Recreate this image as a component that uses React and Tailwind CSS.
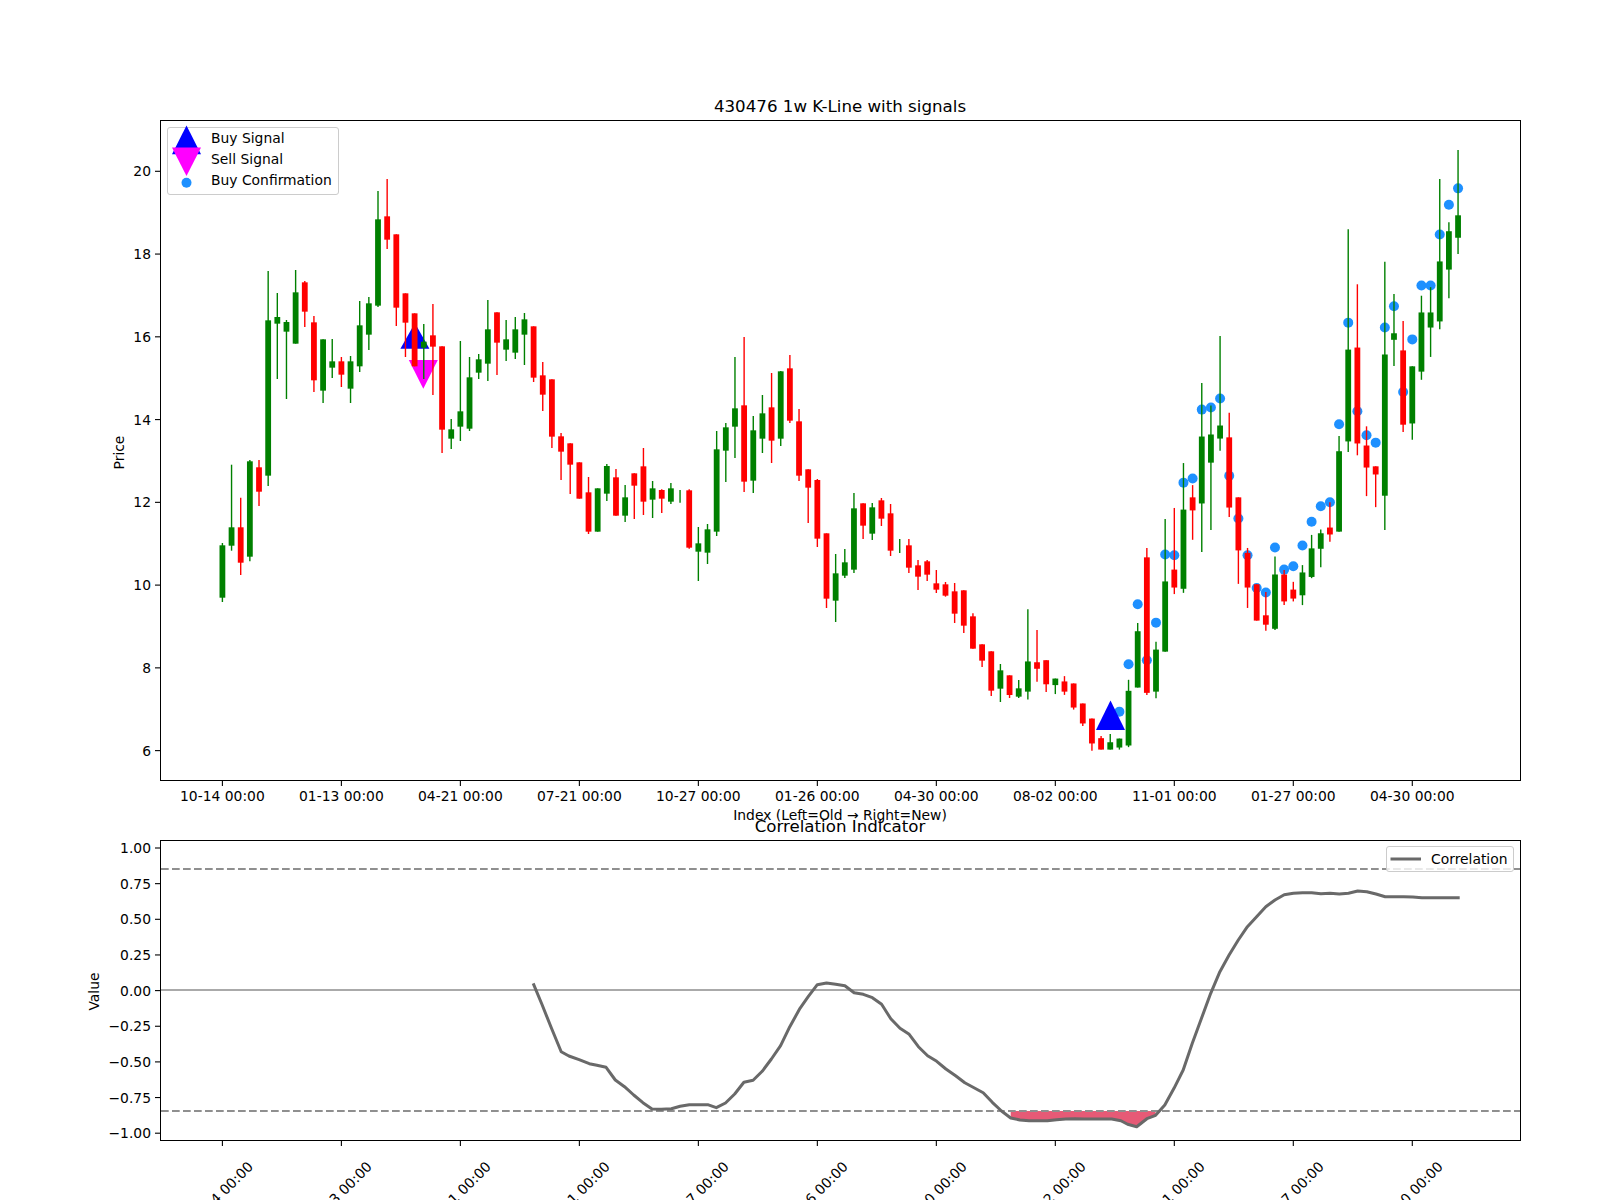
import React from "react";

const xAt = (i) => 222.4 + 9.153 * i;
const ticks = [
  "10-14 00:00", "01-13 00:00", "04-21 00:00", "07-21 00:00", "10-27 00:00", "01-26 00:00",
  "04-30 00:00", "08-02 00:00", "11-01 00:00", "01-27 00:00", "04-30 00:00",
];

// rows: color, wick top, body top, body bottom, wick bottom (y measured off the chart)
const scaled = (rows, off, k) =>
  rows.map(([c, a, b, d, e]) => [c, off + a / k, off + b / k, off + d / k, off + e / k]);

const candles = [
  ["g", 543, 545.3, 597.7, 602],
  ["g", 464.7, 527.3, 545.7, 550.7],
  ["r", 497.7, 527.3, 562.7, 575],
  ["g", 460, 461.3, 556.7, 561.3],
  ["r", 460, 467.3, 491.7, 506],
  ...scaled(
    [
      ["g", 483, 631, 1097, 1128], ["g", 549, 621, 641, 807], ["g", 630, 636, 665, 867], ["g", 480, 547, 701, 701],
      ["r", 513, 517, 605, 651], ["r", 618, 637, 811, 846], ["g", 688, 688, 842, 879], ["g", 687, 754, 773, 804],
      ["r", 741, 754, 794, 831], ["g", 738, 754, 836, 879], ["g", 573, 646, 769, 786], ["g", 561, 580, 674, 720],
      ["g", 243, 328, 587, 591], ["r", 207, 319, 389, 417], ["r", 373, 373, 593, 648], ["r", 550, 550, 638, 741],
      ["r", 610, 610, 769, 769], ["g", 642, 695, 713, 807], ["r", 582, 676, 710, 855], ["r", 709, 709, 959, 1029],
      ["g", 927, 958, 986, 1017], ["g", 693, 904, 950, 993], ["g", 741, 802, 956, 963], ["g", 732, 748, 788, 807],
      ["g", 570, 658, 761, 813], ["r", 607, 607, 698, 795], ["g", 630, 688, 719, 753], ["g", 621, 658, 728, 747],
      ["g", 609, 628, 674, 765], ["r", 649, 649, 803, 816], ["r", 756, 796, 854, 903], ["r", 808, 808, 980, 1014],
      ["r", 969, 979, 1025, 1110], ["r", 1000, 1000, 1064, 1152], ["r", 1057, 1057, 1166, 1166],
    ],
    110,
    3,
  ),
  ...scaled(
    [
      ["r", 471, 517, 635, 642], ["g", 505, 505, 635, 635], ["g", 432, 438, 521, 543], ["r", 447, 472, 587, 587],
      ["g", 495, 532, 587, 606], ["r", 460, 460, 497, 597], ["r", 384, 439, 545, 585], ["g", 483, 505, 539, 594],
      ["r", 508, 510, 536, 579], ["g", 489, 505, 545, 552], ["g", 510, 529, 529, 548], ["r", 508, 511, 683, 686],
      ["g", 621, 670, 695, 783], ["g", 612, 628, 698, 732], ["g", 333, 388, 635, 648], ["g", 309, 322, 392, 486],
      ["g", 111, 265, 320, 414], ["r", 51, 256, 485, 516], ["g", 288, 331, 482, 519], ["g", 225, 280, 356, 399],
      ["r", 159, 262, 362, 429], ["g", 153, 154, 356, 378], ["r", 105, 145, 302, 309], ["r", 267, 304, 467, 483],
      ["r", 448, 448, 503, 609], ["r", 477, 480, 656, 681], ["r", 640, 640, 836, 864], ["g", 702, 760, 842, 906],
      ["g", 687, 727, 767, 774], ["g", 519, 565, 749, 759], ["r", 550, 550, 617, 657], ["g", 549, 562, 641, 660],
      ["r", 534, 541, 596, 618], ["r", 552, 580, 692, 708], ["g", 657, 678, 678, 699], ["r", 657, 676, 743, 759],
      ["r", 720, 736, 770, 810], ["r", 720, 724, 764, 783], ["r", 750, 790, 809, 819], ["r", 786, 793, 827, 830],
      ["r", 789, 814, 881, 909], ["r", 811, 811, 917, 939], ["r", 880, 889, 986, 986], ["r", 973, 973, 1022, 1041],
      ["r", 994, 994, 1112, 1128], ["g", 1032, 1051, 1106, 1146], ["r", 1066, 1066, 1125, 1134], ["g", 1080, 1105, 1130, 1134],
    ],
    320,
    3,
  ),
  ...scaled(
    [
      ["g", 1174, 1302, 1376, 1395], ["r", 1225, 1304, 1320, 1352], ["r", 1299, 1299, 1358, 1377], ["g", 1344, 1344, 1360, 1382],
      ["r", 1338, 1351, 1376, 1384], ["r", 1356, 1356, 1415, 1420], ["r", 1405, 1405, 1454, 1460], ["r", 1442, 1442, 1503, 1521],
      ["r", 1485, 1490, 1518, 1518], ["g", 1480, 1500, 1518, 1518], ["g", 1491, 1491, 1513, 1518], ["g", 1347, 1374, 1508, 1512],
      ["g", 1208, 1228, 1366, 1366], ["r", 1024, 1047, 1379, 1384], ["g", 1254, 1273, 1376, 1392], ["g", 953, 1106, 1278, 1278],
      ["r", 926, 1077, 1121, 1137], ["g", 816, 930, 1124, 1134], ["r", 870, 900, 932, 1004], ["g", 620, 751, 915, 1034],
      ["g", 675, 746, 815, 980], ["g", 505, 724, 756, 786], ["r", 693, 753, 925, 948], ["r", 900, 900, 1030, 1112],
      ["r", 1024, 1036, 1121, 1171], ["r", 1113, 1113, 1202, 1202], ["r", 1132, 1189, 1212, 1227], ["g", 1045, 1089, 1222, 1225],
      ["r", 1078, 1089, 1155, 1164], ["r", 1107, 1126, 1148, 1155], ["g", 1066, 1084, 1140, 1164], ["g", 992, 1025, 1095, 1098],
      ["g", 979, 988, 1026, 1071], ["r", 912, 974, 991, 1009], ["g", 750, 787, 984, 984], ["g", 243, 538, 763, 789],
      ["r", 378, 533, 768, 797], ["r", 726, 773, 827, 897], ["r", 824, 824, 844, 924], ["g", 323, 550, 896, 980],
      ["g", 402, 498, 514, 578], ["r", 468, 540, 722, 740], ["g", 579, 579, 719, 759], ["g", 406, 447, 592, 612],
      ["g", 385, 447, 484, 556], ["g", 120, 322, 469, 488], ["g", 226, 248, 342, 412], ["g", 49, 209, 264, 304],
    ],
    130,
    2.45,
  ),
];

// buy confirmation dots start at candle 98
const dots = [
  1425, 1309, 1162, 1299, 1207, 1040, 1042, 864, 854, 685, 680, 658, 847, 952, 1042, 1122, 1133, 1023, 1077, 1069,
  1018, 960, 922, 912, 721, 472, 689, 748, 766, 484, 432, 642, 513, 381, 381, 256, 183, 143,
].map((y, n) => [xAt(98 + n), 130 + y / 2.45]);

const lineLeft = [
  [1045, 670], [1062, 732], [1081, 805], [1100, 875], [1115, 888], [1135, 899], [1155, 911], [1170, 916], [1188, 922],
  [1206, 960], [1224, 980], [1242, 1005], [1260, 1028], [1278, 1047], [1296, 1048], [1316, 1046], [1333, 1039],
  [1351, 1034], [1369, 1034], [1387, 1034], [1404, 1043], [1422, 1029], [1440, 1002], [1458, 967], [1476, 961],
  [1494, 934], [1512, 897], [1530, 857], [1548, 800],
].map(([x, y]) => [x / 1.96, 760 + y / 3]);

const lineRight = [
  [0, 745], [16, 710], [34, 674], [52, 669], [70, 673], [88, 677], [106, 698], [124, 703], [142, 713], [160, 733],
  [178, 776], [196, 805], [214, 823], [232, 860], [250, 887], [268, 904], [286, 927], [305, 947], [323, 968], [341, 983],
  [359, 998], [377, 1027], [395, 1053], [413, 1074], [431, 1080], [449, 1082], [467, 1082], [485, 1082], [503, 1079],
  [521, 1077], [539, 1076], [557, 1077], [575, 1077], [593, 1077], [611, 1077], [629, 1082], [642, 1093], [660, 1100],
  [680, 1076], [697, 1066], [715, 1035], [733, 985], [751, 930], [769, 850], [787, 775], [805, 700], [823, 635],
  [841, 585], [859, 540], [877, 500], [895, 470], [913, 440], [931, 420], [949, 404], [967, 400], [985, 398], [1003, 398],
  [1021, 401], [1039, 400], [1057, 402], [1075, 400], [1093, 393], [1111, 395], [1129, 402], [1147, 410], [1165, 410],
  [1183, 410], [1201, 411], [1219, 413], [1237, 413], [1255, 413], [1273, 413], [1293, 413],
].map(([x, y]) => [800 + x / 1.96, 760 + y / 3]);

const toPts = (pts) => pts.map(([x, y]) => `${x.toFixed(1)},${y.toFixed(1)}`).join(" ");
const corrLine = [...lineLeft, ...lineRight];
const oversold = lineRight.slice(23, 40);
const oversoldArea = [[oversold[0][0], 1111], ...oversold, [oversold[oversold.length - 1][0], 1111]];

const XTicks = ({ y }) =>
  ticks.map((t, n) => (
    <line key={t + n} x1={xAt(n * 13)} x2={xAt(n * 13)} y1={y} y2={y + 5} stroke="black" strokeWidth="1.1" />
  ));

const YTick = ({ y, label }) => (
  <g>
    <line x1="155" x2="160" y1={y} y2={y} stroke="black" strokeWidth="1.1" />
    <text x="151" y={y + 5} textAnchor="end" fill="black">
      {label}
    </text>
  </g>
);

const Candle = ({ c, i }) => {
  const color = c[0] === "g" ? "#008000" : "#ff0000";
  const x = xAt(i);
  return (
    <g>
      <line x1={x} x2={x} y1={c[1]} y2={c[4]} stroke={color} strokeWidth="1.4" />
      <rect x={x - 2.9} y={c[2]} width="5.8" height={c[3] - c[2]} fill={color} />
    </g>
  );
};

const LegendRow = ({ label, children }) => (
  <div className="flex h-[21px] items-center">
    <svg viewBox="-18.5 -10.5 43 21" className="h-[21px] w-[43px] shrink-0 overflow-visible">
      {children}
    </svg>
    <span className="leading-[21px]">{label}</span>
  </div>
);

const PriceChart = () => (
  <section>
    <h2 className="ml-[160px] h-[28px] w-[1360px] text-center text-[16.67px] leading-[30px] text-black">
      430476 1w K-Line with signals
    </h2>
    <div className="relative ml-[160px] h-[661px] w-[1361px] border border-black">
      <svg viewBox="161 121 1359 659" className="block h-full w-full overflow-visible text-[13.89px]">
        {[20, 18, 16, 14, 12, 10, 8, 6].map((p) => (
          <YTick key={p} y={171.3 + (20 - p) * 41.38} label={p} />
        ))}
        <XTicks y={781} />
        {ticks.map((t, n) => (
          <text key={t + n} x={xAt(n * 13)} y="801" textAnchor="middle" fill="black">
            {t}
          </text>
        ))}
        <text x="840" y="820" textAnchor="middle" fill="black">
          Index (Left=Old → Right=New)
        </text>
        <text x="124" y="452.5" textAnchor="middle" fill="black" transform="rotate(-90 124 452.5)">
          Price
        </text>
        {dots.map(([x, y]) => (
          <circle key={x} cx={x} cy={y} r="5" fill="#1e90ff" />
        ))}
        <polygon points="414.9,323 400.4,348.7 429.4,348.7" fill="#0000ff" />
        <polygon points="1110.5,700.6 1096,730 1125,730" fill="#0000ff" />
        <polygon points="408.8,360 437.8,360 423.3,388.7" fill="#ff00ff" />
        {candles.map((c, i) => (
          <Candle key={i} c={c} i={i} />
        ))}
      </svg>
      <div className="absolute left-[6px] top-[6px] h-[68px] w-[172px] rounded-[3px] border border-[#cccccc] bg-white/80 text-[13.89px] text-black">
        <LegendRow label="Buy Signal">
          <polygon points="0,-13 -14.5,15.7 14.5,15.7" fill="#0000ff" />
        </LegendRow>
        <LegendRow label="Sell Signal">
          <polygon points="-14.5,-12 14.5,-12 0,16.4" fill="#ff00ff" />
        </LegendRow>
        <LegendRow label="Buy Confirmation">
          <circle cx="0" cy="2.3" r="5" fill="#1e90ff" />
        </LegendRow>
      </div>
    </div>
  </section>
);

const CorrelationChart = () => (
  <section className="mt-[31px]">
    <h2 className="ml-[160px] h-[28px] w-[1360px] text-center text-[16.67px] leading-[30px] text-black">
      Correlation Indicator
    </h2>
    <div className="relative ml-[160px] h-[301px] w-[1361px] border border-black">
      <svg viewBox="161 841 1359 299" className="block h-full w-full overflow-visible text-[13.89px]">
        {["1.00", "0.75", "0.50", "0.25", "0.00", "−0.25", "−0.50", "−0.75", "−1.00"].map((l, n) => (
          <YTick key={l} y={848 + n * 35.65} label={l} />
        ))}
        <XTicks y={1141} />
        {ticks.map((t, n) => (
          <text
            key={t + n}
            x={xAt(n * 13) - 2}
            y="1194"
            textAnchor="middle"
            dominantBaseline="central"
            fill="black"
            transform={`rotate(-45 ${xAt(n * 13) - 2} 1194)`}
          >
            {t}
          </text>
        ))}
        <text x="99" y="991.5" textAnchor="middle" fill="black" transform="rotate(-90 99 991.5)">
          Value
        </text>
        <polygon points={toPts(oversoldArea)} fill="#dc143c" fillOpacity="0.7" />
        <line x1="161" x2="1520" y1="990" y2="990" stroke="#aaaaaa" strokeWidth="2.2" />
        <line x1="161" x2="1520" y1="869" y2="869" stroke="#8f8f8f" strokeWidth="2.2" strokeDasharray="7.7 3.3" />
        <line x1="161" x2="1520" y1="1111" y2="1111" stroke="#8f8f8f" strokeWidth="2.2" strokeDasharray="7.7 3.3" />
        <polyline points={toPts(corrLine)} fill="none" stroke="#696969" strokeWidth="3" strokeLinejoin="round" />
      </svg>
      <div className="absolute right-[6px] top-[5px] flex h-[26px] w-[128px] items-center rounded-[3px] border border-[#cccccc] bg-white/80 text-[13.89px] text-black">
        <svg viewBox="0 0 44 4" className="h-[4px] w-[44px] shrink-0">
          <line x1="3.5" x2="34" y1="2" y2="2" stroke="#696969" strokeWidth="3" />
        </svg>
        <span>Correlation</span>
      </div>
    </div>
  </section>
);

export default function App() {
  return (
    <div className="h-[1200px] w-[1600px] overflow-hidden bg-white pt-[92px] font-['DejaVu_Sans',sans-serif]">
      <PriceChart />
      <CorrelationChart />
    </div>
  );
}
